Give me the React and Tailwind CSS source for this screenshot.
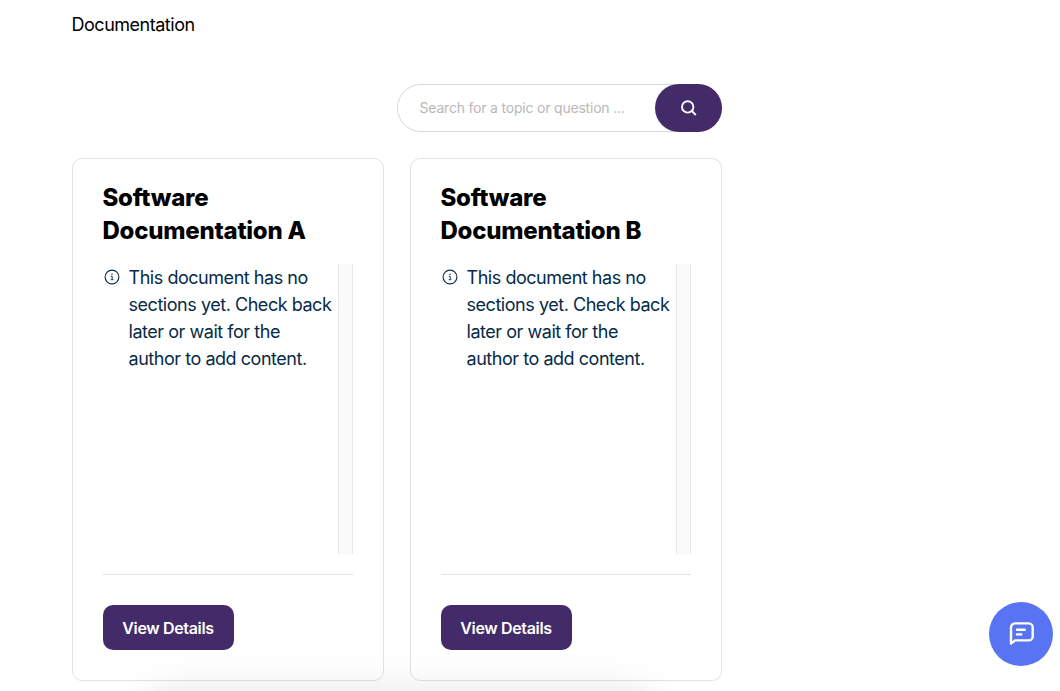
const docs = [
  { id: "a", title: "Software Documentation A" },
  { id: "b", title: "Software Documentation B" },
];

function InfoIcon() {
  return (
    <svg className="w-4 h-4 mt-[5px] shrink-0" viewBox="0 0 16 16" fill="none" stroke="currentColor">
      <circle cx="8" cy="8" r="6.9" strokeWidth="1.1" />
      <path d="M6.9 7.3h1.3v3.4M6.7 10.7h2.7" strokeWidth="0.9" />
      <circle cx="8" cy="5.2" r="0.75" fill="currentColor" stroke="none" />
    </svg>
  );
}

function SearchBar() {
  return (
    <div className="flex w-[325px] h-12 self-end rounded-full border border-[#d8d8d8] bg-white">
      <input
        type="text"
        placeholder="Search for a topic or question ..."
        className="flex-1 min-w-0 pl-[21.5px] text-sm tracking-[-0.2px] outline-none placeholder:text-[#b8b8b8]"
      />
      <button className="flex items-center justify-center w-[67px] h-12 -mt-px -mr-px shrink-0 rounded-full bg-[#432a68] text-white">
        <svg className="w-4 h-4" viewBox="0 0 16 16" fill="none" stroke="currentColor" strokeWidth="1.9">
          <circle cx="6.7" cy="6.9" r="5.7" />
          <path d="M10.8 11L14.8 15" />
        </svg>
      </button>
    </div>
  );
}

function DocCard({ title }) {
  return (
    <article className="flex flex-col w-[312px] h-[523px] px-[30px] pt-[22px] rounded-[10px] border border-[#e2e2e2] bg-white">
      <h2 className="-ml-[0.5px] text-2xl leading-[33px] font-extrabold tracking-[-0.24px] text-black">{title}</h2>

      {/* Section list with its scroll track */}
      <div className="flex h-[290px] mt-[17px]">
        <div className="flex flex-1 pl-px text-[#062b49]">
          <InfoIcon />
          <p className="ml-[8.5px] w-[208px] shrink-0 text-lg leading-[27px] tracking-[-0.46px]">
            This document has no sections yet. Check back later or wait for the author to add content.
          </p>
        </div>
        <div className="w-[15px] shrink-0 border-x border-[#e8e8e8] bg-[#fafafa]"></div>
      </div>

      <div className="mt-5 pt-[30px] border-t border-[#e5e5e5]">
        <button className="w-[131px] h-[45px] pr-[1px] rounded-[10px] bg-[#432a68] text-base font-semibold tracking-[-0.35px] text-white">
          View Details
        </button>
      </div>
    </article>
  );
}

export default function App() {
  return (
    <div className="relative h-[691px] overflow-hidden bg-white font-['Inter',sans-serif]">
      <main className="flex flex-col w-[650px] ml-[72px]">
        <h1 className="mt-[11px] mb-[46px] -ml-[0.5px] text-lg leading-[27px] tracking-[-0.48px] text-black">Documentation</h1>
        <SearchBar />
        <div className="flex gap-[26px] mt-[26px]">
          {docs.map((doc) => (
            <DocCard key={doc.id} title={doc.title} />
          ))}
        </div>
      </main>

      {/* Soft shadow cast by the bar below the fold */}
      <div className="absolute left-[152px] top-full w-[496px] h-20 rounded-xl shadow-[0_0_40px_rgba(0,0,0,0.10)]"></div>

      <button className="absolute left-[989px] top-[602px] flex items-center justify-center w-16 h-16 rounded-full bg-[#5874f2] text-white">
        <svg className="w-8 h-8" viewBox="0 0 32 32" fill="none" stroke="currentColor" strokeWidth="2.4" strokeLinecap="round" strokeLinejoin="round">
          <path d="M6 25.6V9.4a4 4 0 0 1 4-4h13.7a4 4 0 0 1 4 4v9a4 4 0 0 1-4 4H10.2z" />
          <path d="M12 11.7h7.8M12 16.4h4.2" />
        </svg>
      </button>
    </div>
  );
}
